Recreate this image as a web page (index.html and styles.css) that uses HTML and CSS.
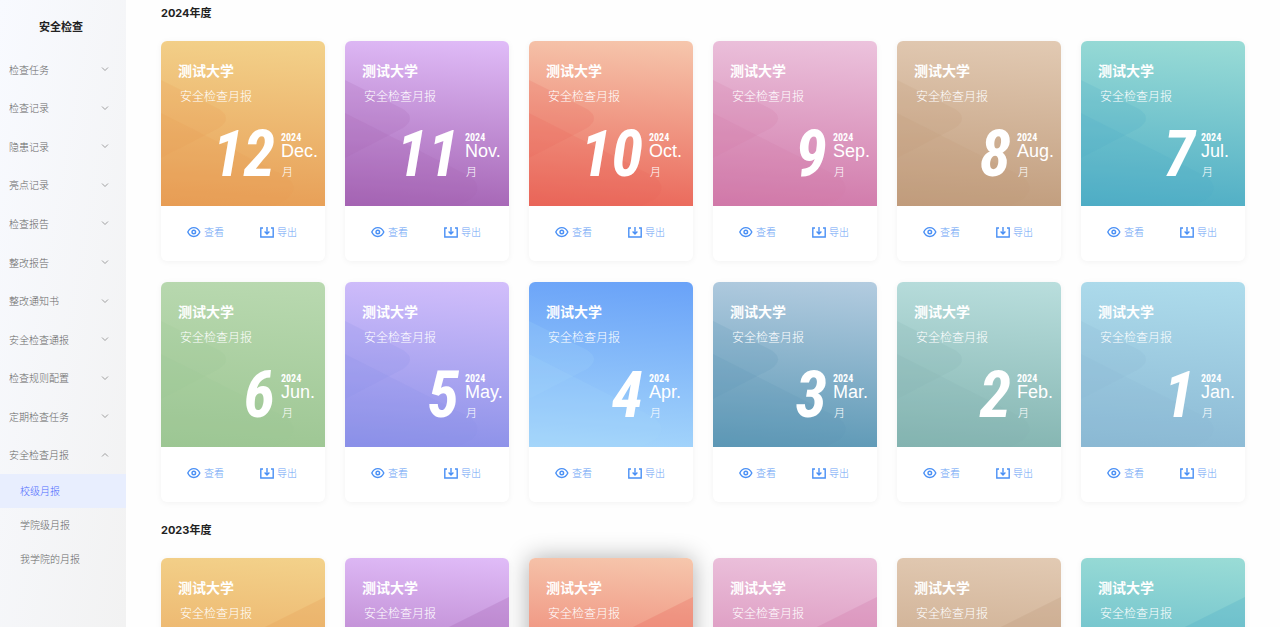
FILE: index.html
```html
<!doctype html>
<html lang="zh-CN">
  <head>
    <meta charset="utf-8">
    <title>安全检查月报</title>
    <link rel="stylesheet" href="styles.css">
  </head>
  <body>
    <svg class="icons" aria-hidden="true">
      <symbol id="icon-down" viewBox="0 0 8 8"><path d="M1 2.5 L4 5.5 L7 2.5" /></symbol>
      <symbol id="icon-up" viewBox="0 0 8 8"><path d="M1 5.5 L4 2.5 L7 5.5" /></symbol>
      <symbol id="icon-view" viewBox="0 0 14 14">
        <path d="M0.8 7 C3.4 1.1 10.2 1.1 12.8 7 C10.2 12.9 3.4 12.9 0.8 7 Z" />
        <circle cx="6.8" cy="7" r="1.8" />
      </symbol>
      <symbol id="icon-export" viewBox="0 0 14 14">
        <path d="M3 3 H0.8 V12 H13.2 V3 H11" />
        <path d="M7 2 V8.8 M4.6 6.6 L7 9 L9.4 6.6" />
      </symbol>
      <symbol id="shape-left" viewBox="0 0 164 165" preserveAspectRatio="none">
        <path d="M0 39 L58 68 Q72 77 58 87 L0 117 Z" />
        <path d="M0 72 L124 135 Q140 146 126 158 L112 165 H0 Z" />
      </symbol>
      <symbol id="shape-right" viewBox="0 0 164 165" preserveAspectRatio="none">
        <path d="M164 39 L0 121 V165 H164 Z" />
      </symbol>
    </svg>

    <div class="layout">
      <aside class="sidebar">
        <h1 class="sidebar_titre">安全检查</h1>
        <nav>
          <div class="menu">
            <button class="menu_item">检查任务<svg><use href="#icon-down" /></svg></button>
            <button class="menu_item">检查记录<svg><use href="#icon-down" /></svg></button>
            <button class="menu_item">隐患记录<svg><use href="#icon-down" /></svg></button>
            <button class="menu_item">亮点记录<svg><use href="#icon-down" /></svg></button>
            <button class="menu_item">检查报告<svg><use href="#icon-down" /></svg></button>
            <button class="menu_item">整改报告<svg><use href="#icon-down" /></svg></button>
            <button class="menu_item">整改通知书<svg><use href="#icon-down" /></svg></button>
            <button class="menu_item">安全检查通报<svg><use href="#icon-down" /></svg></button>
            <button class="menu_item">检查规则配置<svg><use href="#icon-down" /></svg></button>
            <button class="menu_item">定期检查任务<svg><use href="#icon-down" /></svg></button>
            <button class="menu_item">安全检查月报<svg><use href="#icon-up" /></svg></button>
          </div>
          <a class="submenu_item active" href="#">校级月报</a>
          <a class="submenu_item" href="#">学院级月报</a>
          <a class="submenu_item" href="#">我学院的月报</a>
        </nav>
      </aside>

      <main class="content">
        <section class="year">
          <h2 class="year_title">2024年度</h2>
          <div class="cards" data-year="2024" data-first="1" data-shape="left"></div>
        </section>
        <section class="year">
          <h2 class="year_title">2023年度</h2>
          <div class="cards" data-year="2023" data-first="7" data-shape="right" data-selected="10"></div>
        </section>
      </main>
    </div>

    <script src="script.js"></script>
  </body>
</html>
```
FILE: styles.css
```css
* {
  box-sizing: border-box;
}

body {
  margin: 0;
  font-family: Inter, "Noto Sans CJK SC", sans-serif;
  font-size: 10px;
  color: #222;
  background-color: #fefefe;
}

h1, h2, h3, p {
  margin: 0;
}

button {
  border: none;
  padding: 0;
  background-color: transparent;
  font: inherit;
  color: inherit;
  cursor: pointer;
}

.icons {
  display: none;
}

.layout {
  display: flex;
  height: 100vh;
}

/* sidebar */
.sidebar {
  flex: none;
  width: 126px;
  background: linear-gradient(100deg, #f8faff, #f2f2f2);
}

.sidebar_titre {
  padding: 17px 4px 13px 0;
  font-size: 11px;
  line-height: 20px;
  text-align: center;
}

.menu {
  display: flex;
  flex-direction: column;
  height: 424px;
}

.menu_item {
  flex: 1;
  display: flex;
  align-items: center;
  justify-content: space-between;
  padding: 0 17px 0 9px;
  font-weight: 300;
  color: #666;
}

.menu_item svg {
  width: 8px;
  height: 8px;
  fill: none;
  stroke: #888;
  stroke-width: 0.8;
}

.submenu_item {
  display: block;
  padding-left: 20px;
  line-height: 34px;
  font-weight: 300;
  color: #666;
  text-decoration: none;
}

.submenu_item.active {
  background-color: #e8eefe;
  color: #4d6bff;
}

/* content */
.content {
  flex: 1;
  padding: 3px 35px;
  overflow-y: auto;
  scrollbar-width: none;
}

.year {
  margin-bottom: 18px;
}

.year_title {
  margin-bottom: 18px;
  font-size: 11px;
  line-height: 20px;
}

.cards {
  display: grid;
  grid-template-columns: repeat(6, 1fr);
  gap: 21px 20px;
}

.card {
  border-radius: 6px;
  background-color: white;
  box-shadow: 0 1px 6px rgba(0, 0, 0, 0.05);
}

.card.selected {
  box-shadow: 0 0 24px rgba(0, 0, 0, 0.32);
}

.card_head {
  position: relative;
  height: 165px;
  padding: 20px 0 0 17px;
  border-radius: 6px 6px 0 0;
  overflow: hidden;
  background: linear-gradient(184deg, var(--top), var(--bottom));
  color: white;
}

.card_shape {
  position: absolute;
  top: 0;
  left: 0;
  width: 100%;
  height: 100%;
  fill: var(--bottom);
  fill-opacity: 0.18;
}

.cards[data-shape="right"] .card_shape {
  fill-opacity: 0.28;
}

.card_school, .card_type, .card_date {
  position: relative;
}

.card_school {
  font-size: 14px;
  line-height: 20px;
}

.card_type {
  margin-top: 6px;
  padding-left: 2px;
  font-size: 12px;
  line-height: 20px;
  font-weight: 300;
}

.card_date {
  display: flex;
  gap: 6px;
  margin-top: 16px;
}

.card_number {
  width: 97px;
  font-family: "Roboto Condensed", Roboto, sans-serif;
  font-size: 64px;
  line-height: 64px;
  font-weight: bold;
  font-style: italic;
  text-align: right;
}

.card_month {
  display: flex;
  flex-direction: column;
  padding-top: 10px;
}

.card_month b {
  font-family: "Roboto Condensed", Roboto, sans-serif;
  font-size: 10px;
  line-height: 10px;
}

.card_month span {
  font-family: "Liberation Sans", sans-serif;
  font-size: 18px;
  line-height: 16px;
}

.card_month small {
  margin-top: 6px;
  padding-left: 1px;
  font-size: 11px;
  line-height: 14px;
  font-weight: 300;
}

.card_actions {
  display: flex;
  justify-content: space-between;
  height: 55px;
  padding: 0 28px 4px 26px;
}

.card_actions button {
  display: flex;
  align-items: center;
  gap: 3px;
  line-height: 12px;
  font-weight: 300;
  color: #6ba3f5;
}

.card_actions svg {
  width: 14px;
  height: 14px;
  fill: none;
  stroke: #4a90f5;
  stroke-width: 1.4;
}
```
FILE: script.js
```js
var months = [
  { number: 12, name: "Dec.", top: "#f3d28b", bottom: "#e79d55" },
  { number: 11, name: "Nov.", top: "#e0bcf8", bottom: "#a463b3" },
  { number: 10, name: "Oct.", top: "#f6c7ad", bottom: "#ea6558" },
  { number: 9, name: "Sep.", top: "#ecc3dd", bottom: "#d078a9" },
  { number: 8, name: "Aug.", top: "#e2cab3", bottom: "#c09c7c" },
  { number: 7, name: "Jul.", top: "#9adcd6", bottom: "#4eadc5" },
  { number: 6, name: "Jun.", top: "#b9d9b0", bottom: "#9dc693" },
  { number: 5, name: "May.", top: "#d2befb", bottom: "#8a90e8" },
  { number: 4, name: "Apr.", top: "#69a2f8", bottom: "#a5d6fb" },
  { number: 3, name: "Mar.", top: "#b3cce0", bottom: "#5c98b5" },
  { number: 2, name: "Feb.", top: "#b9dedd", bottom: "#83b4b0" },
  { number: 1, name: "Jan.", top: "#aedcec", bottom: "#8bb9d4" }
];

function create_card(month, year, shape, selected) {
  var card = document.createElement('article');
  card.className = selected ? 'card selected' : 'card';
  card.style.setProperty('--top', month.top);
  card.style.setProperty('--bottom', month.bottom);
  card.innerHTML =
    '<div class="card_head">' +
      '<svg class="card_shape"><use href="#shape-' + shape + '" /></svg>' +
      '<h3 class="card_school">测试大学</h3>' +
      '<p class="card_type">安全检查月报</p>' +
      '<div class="card_date">' +
        '<div class="card_number">' + month.number + '</div>' +
        '<div class="card_month"><b>' + year + '</b><span>' + month.name + '</span><small>月</small></div>' +
      '</div>' +
    '</div>' +
    '<div class="card_actions">' +
      '<button><svg><use href="#icon-view" /></svg>查看</button>' +
      '<button><svg><use href="#icon-export" /></svg>导出</button>' +
    '</div>';
  return card;
}

var lists = document.querySelectorAll('.cards');
for (var i = 0; i < lists.length; i = i + 1) {
  var list = lists[i];
  for (var j = 0; j < months.length; j = j + 1) {
    // the year starts at its first month with a report
    if (months[j].number >= Number(list.dataset.first)) {
      var selected = list.dataset.selected == months[j].number;
      list.appendChild(create_card(months[j], list.dataset.year, list.dataset.shape, selected));
    }
  }
}
```
